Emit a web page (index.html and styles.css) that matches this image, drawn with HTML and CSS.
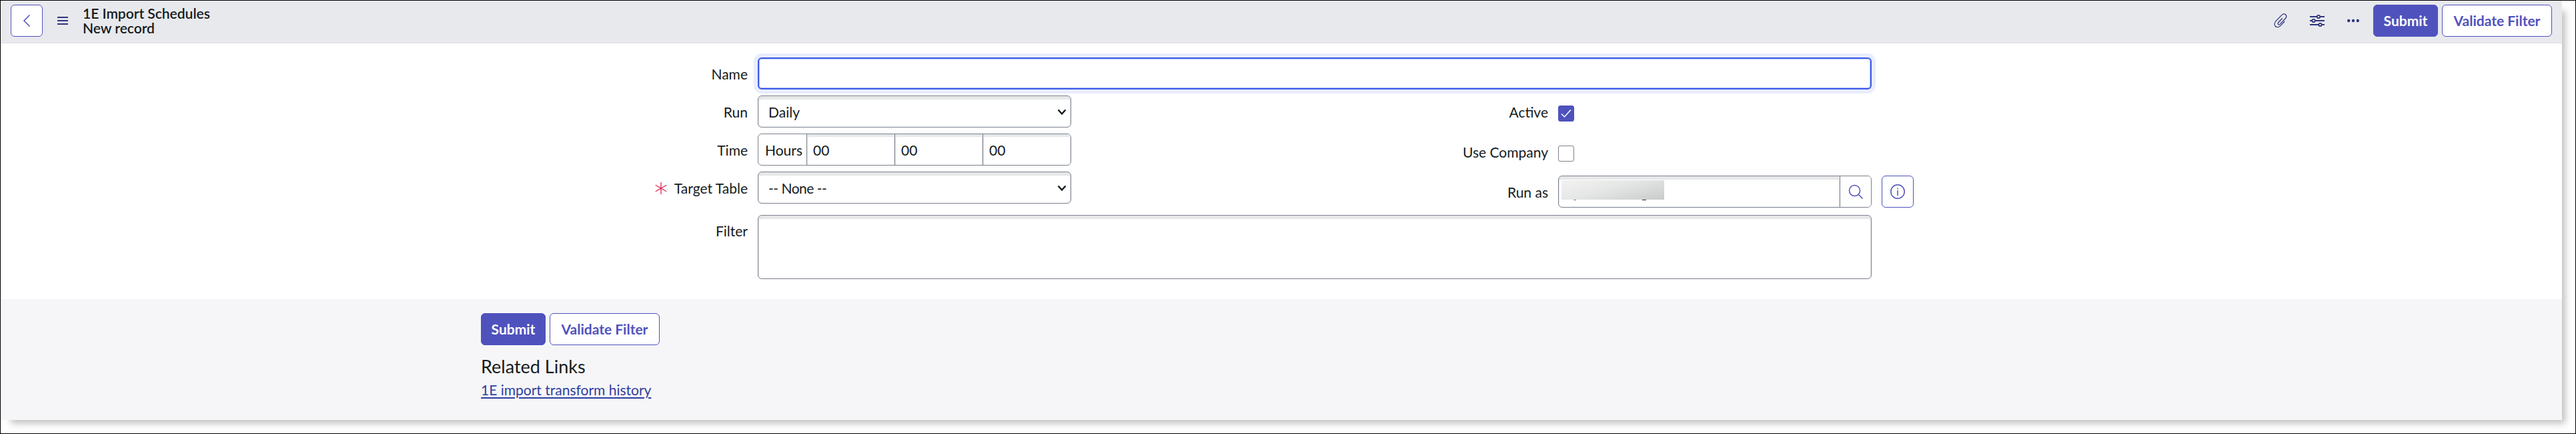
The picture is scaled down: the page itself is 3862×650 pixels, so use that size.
FILE: index.html
```html
<!DOCTYPE html>
<html lang="en">
<head>
<meta charset="utf-8">
<title>1E Import Schedules</title>
<link rel="stylesheet" href="styles.css">
</head>
<body>
<main class="panel">
  <header class="toolbar">
    <button class="btn icon-btn back" aria-label="Back"><svg width="12" height="20" viewBox="0 0 12 20"><path d="M10.500 1.500 2 10l8.500 8.500"/></svg></button>
    <svg class="burger" width="16" height="12" viewBox="0 0 16 12"><path d="M0 1h16M0 6h16M0 11h16"/></svg>
    <h1 class="title">1E Import Schedules<br>New record</h1>
    <div class="actions">
      <svg class="clip" width="20" height="22" viewBox="0 0 20 22"><path d="M12.800 7.200 6.700 13.700c-.9 1-.9 2 0 2.700.7.600 1.700.5 2.500-.3L17.300 7.700c1.700-1.800 1.900-4.200.4-5.700-1.600-1.500-4-1.300-5.700.4L3 11.600c-2.400 2.500-2.600 5.700-.7 7.700 2 2 5.100 1.700 7.500-.7l6.400-6.600"/></svg>
      <svg class="sliders" width="22" height="20" viewBox="0 0 22 20"><path d="M0 4h10M16 4h6M0 10h3M8 10h14M0 16h13M18 16h4"/><circle cx="13" cy="4" r="2.200"/><circle cx="5.500" cy="10" r="2.200"/><circle cx="15.500" cy="16" r="2.200"/></svg>
      <svg class="dots" width="18" height="6" viewBox="0 0 18 6"><circle cx="2.200" cy="3" r="2.200"/><circle cx="9" cy="3" r="2.200"/><circle cx="15.800" cy="3" r="2.200"/></svg>
      <div class="buttons"><button class="btn primary">Submit</button><button class="btn validate">Validate Filter</button></div>
    </div>
  </header>
  <form class="form">
    <div class="row"><label class="label">Name</label><input class="field wide focused" type="text"></div>
    <div class="columns">
      <div class="left">
        <div class="row"><label class="label">Run</label><div class="field select">Daily<svg width="14" height="10" viewBox="0 0 14 10"><path d="m1.500 1.500 5.500 6 5.500-6"/></svg></div></div>
        <div class="row"><label class="label">Time</label><div class="time"><span class="unit">Hours</span><span class="part">00</span><span class="part">00</span><span class="part">00</span></div></div>
        <div class="row"><label class="label"><svg class="required" width="18" height="18" viewBox="0 0 18 18"><path d="M9 0v18M.8 4.300l16.400 9.400M17.200 4.300.8 13.700"/></svg>Target Table</label><div class="field select"><span class="none">-- None --</span><svg width="14" height="10" viewBox="0 0 14 10"><path d="m1.500 1.500 5.500 6 5.500-6"/></svg></div></div>
      </div>
      <div class="right">
        <div class="row check-row"><label class="label">Active</label><span class="check on"><svg width="16" height="14" viewBox="0 0 16 14"><path d="m1 7.500 4.500 4.500L15 1.500"/></svg></span></div>
        <div class="row check-row"><label class="label">Use Company</label><span class="check"></span></div>
        <div class="row"><label class="label">Run as</label>
          <div class="field reference"><span class="value"><span class="redacted"></span><span class="marks"><i class="mark"></i><i class="mark tail"></i></span></span><span class="lookup"><svg width="23" height="23" viewBox="0 0 23 23"><circle cx="9.500" cy="9.500" r="8"/><path d="m15 15 6.500 6.500"/></svg></span></div>
          <button class="btn icon-btn info" type="button" aria-label="Info"><svg width="22" height="22" viewBox="0 0 22 22"><circle cx="11" cy="11" r="10.200"/><path d="M11 9v8M11 5.500v2"/></svg></button>
        </div>
      </div>
    </div>
    <div class="row"><label class="label filter-label">Filter</label><div class="field wide filter"></div></div>
  </form>
  <footer class="footer">
    <div class="buttons"><button class="btn primary">Submit</button><button class="btn validate">Validate Filter</button></div>
    <h2 class="related">Related Links</h2>
    <a class="link" href="#">1E import transform history</a>
  </footer>
</main>
</body>
</html>
```
FILE: styles.css
```css
* { box-sizing: border-box; }
body {
  margin: 0;
  height: 650px;
  border: 1px solid #000;
  overflow: hidden;
  background: #fff;
  color: #161b1c;
  font: 21px/28px Lato, sans-serif;
}
svg { fill: none; stroke: currentColor; flex: none; }
.panel {
  width: 3840px;
  height: 628px;
  display: flex;
  flex-direction: column;
  background: #fff;
  box-shadow: 10px 10px 10px -5px rgba(0, 0, 0, .25);
}
.toolbar {
  height: 64px;
  display: flex;
  align-items: center;
  padding: 0 15px 3px;
  background: #e8e9ed;
  border-bottom: 1px solid #dfe0e5;
  color: #30367c;
}
.btn {
  height: 48px;
  padding: 0;
  border: 1px solid #4f52bd;
  border-radius: 6px;
  background: #fff;
  color: #4f52bd;
  font: 700 21px/28px Lato, sans-serif;
}
.primary { width: 97px; background: #4f52bd; color: #fff; }
.validate { width: 165px; }
.icon-btn { width: 48px; display: flex; align-items: center; justify-content: center; }
.buttons { display: flex; gap: 6px; }
.burger { margin-left: 22px; stroke-width: 1.8; }
.title { margin: 0 0 0 22px; font: 600 21px/22px Lato, sans-serif; color: #161b1c; }
.actions { display: flex; align-items: center; margin-left: auto; }
.clip { stroke-width: 1.3; margin-right: 34px; }
.sliders { stroke-width: 1.8; margin-right: 34px; }
.dots { fill: currentColor; stroke: none; margin-right: 21px; }

.form { height: 383px; padding: 21px 0 0 680px; }
.row { display: flex; }
.label { width: 440px; margin-right: 15px; padding-top: 11px; text-align: right; flex: none; }
.filter-label { padding-top: 10px; }
.field {
  height: 48px;
  border: 1px solid #7c828f;
  border-radius: 6px;
  background: #fff;
  box-shadow: inset 0 5px 0 #e6e7e8, inset 1px 0 1px #e6e7e8, inset -1px 0 1px #e6e7e8;
}
.wide { width: 1670px; }
.focused {
  border: 2px solid #3e5be8;
  outline: none;
  box-shadow: 0 0 0 6px #e9edfd, inset 0 0 0 1px #b4c2f8;
}
.columns { display: flex; margin-top: 9px; height: 179px; }
.left { display: flex; flex-direction: column; gap: 9px; width: 925px; }
.select { width: 470px; padding: 10px 6px 0 15px; display: flex; justify-content: space-between; }
.select svg { margin-top: 9px; stroke-width: 2.5; color: #161b1c; }
.none { letter-spacing: -.5px; }
.time {
  width: 470px;
  height: 48px;
  display: flex;
  border: 1px solid #7c828f;
  border-radius: 6px;
  overflow: hidden;
}
.unit { width: 72px; padding: 10px 0 0 10px; }
.part {
  flex: 1;
  padding: 10px 0 0 9px;
  border-left: 1px solid #7c828f;
  box-shadow: inset 0 4px 0 #e6e7e8, inset 1px 0 1px #e6e7e8, inset -1px 0 1px #e6e7e8;
}
.required { color: #e0224b; stroke-width: 1.3; margin-right: 11px; vertical-align: -1px; }
.right { width: 1300px; }
.right .label { width: 715px; }
.check-row { height: 60px; }
.check { width: 24px; height: 24px; margin-top: 15px; border: 1px solid #7c828f; border-radius: 3px; display: flex; align-items: center; justify-content: center; }
.on { background: #4f52bd; border-color: #4f52bd; color: #fff; }
.on svg { stroke-width: 1.5; }
.reference { width: 470px; display: flex; overflow: hidden; }
.value { flex: 1; padding: 6px 0 0 4px; box-shadow: inset -1px 0 1px #e6e7e8; }
.redacted { display: block; width: 154px; height: 29px; background: linear-gradient(165deg, #f2f2f1, #e5e6e6 45%, #c9cbcb); }
.marks { display: flex; gap: 100px; padding-left: 19px; }
.mark { width: 2px; height: 1px; background: #333; }
.tail { width: 6px; }
.lookup { width: 47px; border-left: 1px solid #7c828f; background: #fff; color: #4f52bd; display: flex; align-items: center; justify-content: center; }
.lookup svg, .info svg, .back svg { stroke-width: 1.5; }
.info { margin-left: 15px; }
.filter { height: 96px; }

.footer { flex: 1; padding: 21px 0 0 720px; background: #f6f6f8; }
.related { margin: 13px 0 0; font: 400 27px/38px Lato, sans-serif; }
.link { display: inline-block; margin-top: 2px; color: #2e3f9e; text-decoration: underline; text-decoration-thickness: 2px; text-underline-offset: 3px; }
```
